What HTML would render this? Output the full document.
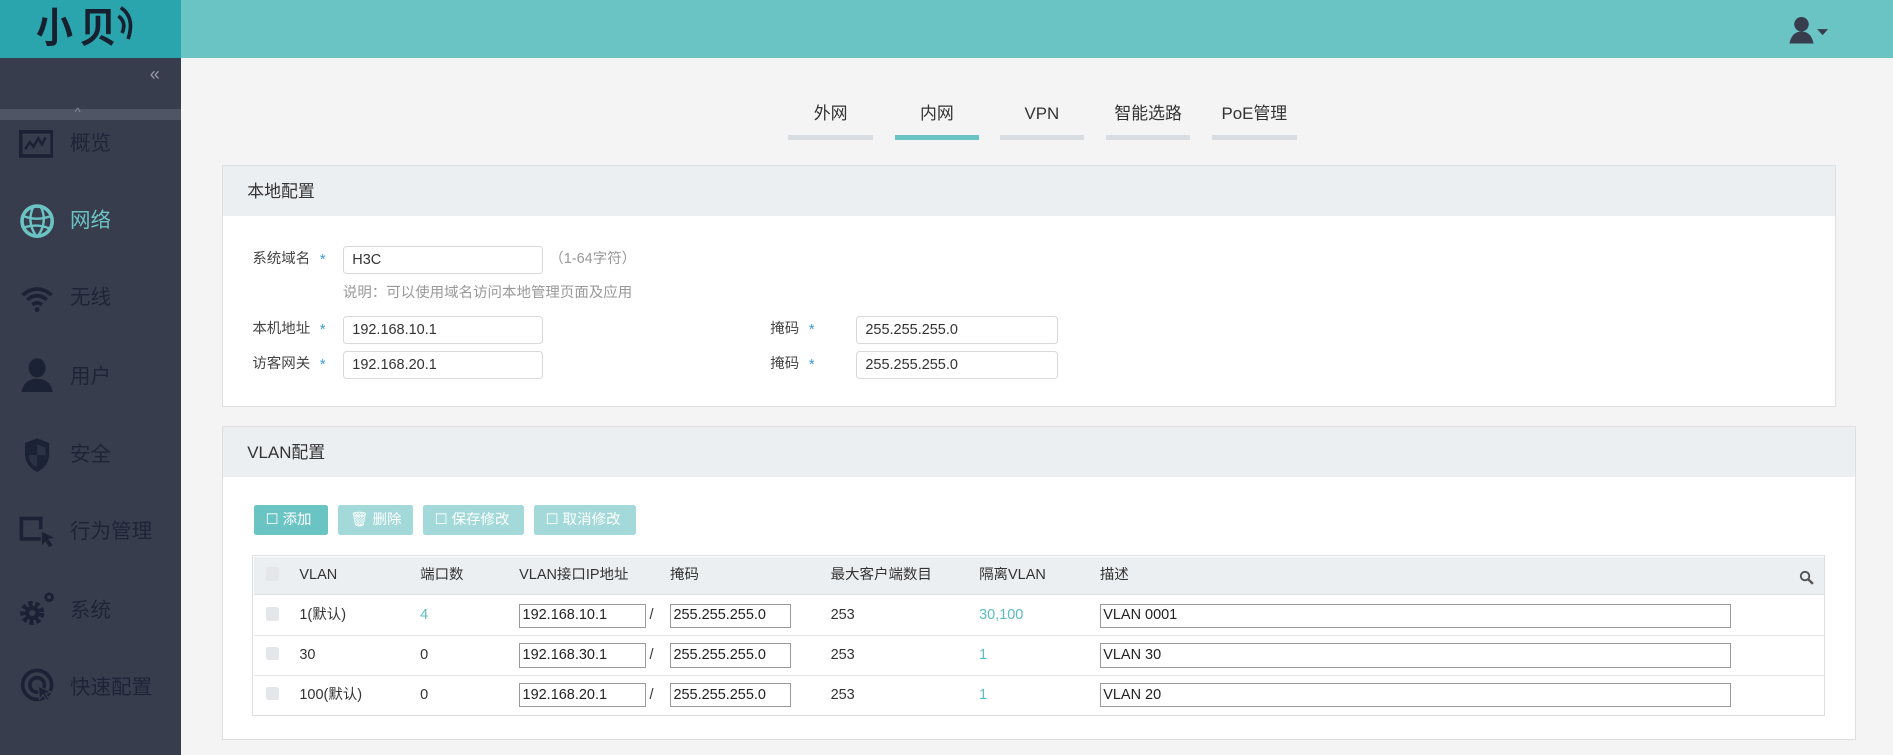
<!DOCTYPE html>
<html><head><meta charset="utf-8"><style>
*{margin:0;padding:0;box-sizing:border-box}
html,body{width:1893px;height:755px;overflow:hidden;background:#f4f4f4}
#w{position:relative;width:1568px;height:626px;zoom:1.20727;font-family:"Liberation Sans","Noto Sans CJK SC",sans-serif;color:#333;font-size:12px;line-height:14px}
.a{position:absolute}
.hd{left:0;top:0;width:1568px;height:48px;background:#6bc4c4}
.logo{left:0;top:0;width:150px;height:48px;background:#2aa4ad}
.lt{position:absolute;left:30px;top:6px;font-size:34px;line-height:36px;color:#16202e;letter-spacing:6px;font-weight:bold;transform:scaleX(.9);transform-origin:left}
.sb{left:0;top:48px;width:150px;height:578px;background:#383d4d}
.mi{position:absolute;left:58px;font-size:17px;line-height:20px;color:#1e2438}
.ic{position:absolute;left:16px}
.tab{position:absolute;top:86px;font-size:14px;line-height:16px;color:#333;width:70px;text-align:center}
.bar{position:absolute;top:112px;width:70px;height:4px;background:#d8dde3}
.pn{background:#fff;border:1px solid #dde0e3}
.ph{position:absolute;left:0;top:0;right:0;height:41px;background:#eceff2;font-size:14px;line-height:16px;padding:13px 0 0 20px;color:#333}
.lb{position:absolute;font-size:12px;color:#444}
.st{position:absolute;color:#3a9ad9;font-size:12px}
.in{position:absolute;height:23px;border:1px solid #d9d9d9;border-radius:3px;background:#fff;font-size:12px;padding:4px 0 0 7px;color:#333}
.btn{position:absolute;top:418px;height:25px;color:#fff;font-size:12px;padding:6px 0 0 10px;border-radius:2px}
.c{position:absolute;font-size:12px;color:#333}
.cb{position:absolute;left:220px;width:11px;height:11px;background:#e4e6ea;border-radius:2px}
.ti{position:absolute;height:20px;border:1px solid #999;background:#fff;font-size:12px;padding:2px 0 0 2px;color:#222}
.t{color:#5bbcc0}
</style></head><body><div id="w">
<div class="a hd"></div>
<div class="a logo"><div class="lt">小贝</div>
<svg class="a" style="left:96px;top:3px" width="24" height="34"><path d="M4 3q12 8 6 26M2 10q7 5 3 14" fill="none" stroke="#16202e" stroke-width="3"/></svg></div>
<svg class="a" style="left:1480px;top:14px" width="40" height="24"><circle cx="12" cy="6" r="6" fill="#383d4d"/><path d="M2 22 Q4 12 12 12 Q20 12 22 22Z" fill="#383d4d"/><path d="M25 10h9l-4.5 5z" fill="#383d4d"/></svg>
<div class="a sb"></div>
<div class="a" style="left:124px;top:55px;color:#99a;font-size:15px">«</div>
<div class="a" style="left:0;top:90px;width:150px;height:9px;background:#4f5565"></div>
<div class="a" style="left:62px;top:88px;color:#8a8f9a;font-size:10px;line-height:10px">^</div>
<div class="mi" style="top:109px">概览</div>
<svg class="ic" style="top:108px" width="28" height="24"><rect x="1.5" y="1.5" width="26" height="20" fill="none" stroke="#1b2236" stroke-width="3"/><path d="M5 16l4-6 3 4 4-7 3 5 3-6" fill="none" stroke="#1b2236" stroke-width="2"/></svg>
<div class="mi" style="top:173px;color:#6bc4c4">网络</div>
<svg class="ic" style="top:168px" width="30" height="30"><circle cx="15" cy="15" r="12.5" fill="none" stroke="#6bc4c4" stroke-width="3"/><path d="M4 11q11 4 22 0M5 20q10-3 20 1M12 3q-6 12 2 24M18 3q6 12-2 24" fill="none" stroke="#6bc4c4" stroke-width="2"/></svg>
<div class="mi" style="top:237px">无线</div>
<svg class="ic" style="top:234px" width="30" height="26"><path d="M3 10q12-10 24 0M7 14q8-7 16 0M11 18q4-3 8 0" fill="none" stroke="#1b2236" stroke-width="3"/><circle cx="15" cy="22" r="2" fill="#1b2236"/></svg>
<div class="mi" style="top:302px">用户</div>
<svg class="ic" style="top:296px" width="30" height="30"><ellipse cx="15" cy="9" rx="7" ry="8" fill="#1b2236"/><path d="M2 29q2-11 13-11t13 11z" fill="#1b2236"/></svg>
<div class="mi" style="top:367px">安全</div>
<svg class="ic" style="top:362px" width="30" height="30"><path d="M5 5l10-4 10 4v9q0 10-10 15Q5 24 5 14z" fill="#1b2236"/><path d="M15 6v9h7v-6zM8 15h7v10q-7-3-7-10z" fill="#383d4d" opacity=".6"/></svg>
<div class="mi" style="top:431px">行为管理</div>
<svg class="ic" style="top:427px" width="32" height="28"><path d="M18 19H2V2h16v9" fill="none" stroke="#1b2236" stroke-width="3"/><path d="M19 13l10 5-5 1 4 5-3 2-3-5-3 3z" fill="#1b2236"/></svg>
<div class="mi" style="top:496px">系统</div>
<svg class="ic" style="top:489px" width="32" height="32"><circle cx="11" cy="19" r="7" fill="none" stroke="#1b2236" stroke-width="6" stroke-dasharray="3 2"/><circle cx="11" cy="19" r="6" fill="#1b2236"/><circle cx="11" cy="19" r="2.5" fill="#383d4d"/><circle cx="25" cy="6" r="4" fill="#1b2236"/><circle cx="25" cy="6" r="1.5" fill="#383d4d"/></svg>
<div class="mi" style="top:560px">快速配置</div>
<svg class="ic" style="top:553px" width="32" height="32"><circle cx="15" cy="14" r="12" fill="none" stroke="#1b2236" stroke-width="3"/><circle cx="15" cy="14" r="6" fill="none" stroke="#1b2236" stroke-width="3"/><path d="M16 15l11 5-5 1 3 5-2 1-3-5-3 4z" fill="#1b2236" stroke="#383d4d"/></svg>

<div class="tab" style="left:653px">外网</div><div class="tab" style="left:741px">内网</div><div class="tab" style="left:828px">VPN</div><div class="tab" style="left:916px">智能选路</div><div class="tab" style="left:1004px">PoE管理</div>
<div class="bar" style="left:653px"></div><div class="bar" style="left:741px;background:#6bc4c4"></div><div class="bar" style="left:828px"></div><div class="bar" style="left:916px"></div><div class="bar" style="left:1004px"></div>

<div class="a pn" style="left:184px;top:137px;width:1337px;height:200px"><div class="ph">本地配置</div></div>
<div class="lb" style="left:209px;top:208px">系统域名</div><div class="st" style="left:265px;top:209px">*</div>
<div class="in" style="left:284px;top:204px;width:166px">H3C</div>
<div class="lb" style="left:455px;top:208px;color:#999">（1-64字符）</div>
<div class="lb" style="left:284px;top:236px;color:#999">说明：可以使用域名访问本地管理页面及应用</div>
<div class="lb" style="left:209px;top:266px">本机地址</div><div class="st" style="left:265px;top:267px">*</div>
<div class="in" style="left:284px;top:262px;width:166px">192.168.10.1</div>
<div class="lb" style="left:209px;top:295px">访客网关</div><div class="st" style="left:265px;top:296px">*</div>
<div class="in" style="left:284px;top:291px;width:166px">192.168.20.1</div>
<div class="lb" style="left:638px;top:266px">掩码</div><div class="st" style="left:670px;top:267px">*</div>
<div class="in" style="left:709px;top:262px;width:167px">255.255.255.0</div>
<div class="lb" style="left:638px;top:295px">掩码</div><div class="st" style="left:670px;top:296px">*</div>
<div class="in" style="left:709px;top:291px;width:167px">255.255.255.0</div>

<div class="a pn" style="left:184px;top:353px;width:1353px;height:260px"><div class="ph">VLAN配置</div></div>
<div class="btn" style="left:210px;width:62px;background:#6bc4c4">☐ 添加</div>
<div class="btn" style="left:280px;width:62px;background:#a3d9d9">🗑 删除</div>
<div class="btn" style="left:350px;width:84px;background:#a3d9d9">☐ 保存修改</div>
<div class="btn" style="left:442px;width:85px;background:#a3d9d9">☐ 取消修改</div>
<div class="a" style="left:209px;top:460px;width:1303px;height:133px;border:1px solid #dde0e3;background:#fff"></div>
<div class="a" style="left:210px;top:461px;width:1301px;height:32px;background:#eceff2;border-bottom:1px solid #dde0e3"></div>
<div class="a" style="left:210px;top:526px;width:1301px;border-top:1px solid #e3e5e8"></div>
<div class="a" style="left:210px;top:559px;width:1301px;border-top:1px solid #e3e5e8"></div>
<div class="cb" style="top:470px"></div><div class="cb" style="top:503px"></div><div class="cb" style="top:536px"></div><div class="cb" style="top:569px"></div>
<div class="c" style="left:248px;top:470px">VLAN</div><div class="c" style="left:348px;top:470px">端口数</div><div class="c" style="left:430px;top:470px">VLAN接口IP地址</div><div class="c" style="left:555px;top:470px">掩码</div><div class="c" style="left:688px;top:470px">最大客户端数目</div><div class="c" style="left:811px;top:470px">隔离VLAN</div><div class="c" style="left:911px;top:470px">描述</div>
<svg class="a" style="left:1490px;top:472px" width="13" height="13"><circle cx="5" cy="5" r="3.5" fill="none" stroke="#555" stroke-width="1.6"/><path d="M7.5 7.5l4 4" stroke="#555" stroke-width="2"/></svg>
<div class="c" style="left:248px;top:503px">1(默认)</div><div class="c t" style="left:348px;top:503px">4</div>
<div class="ti" style="left:430px;top:500px;width:105px">192.168.10.1</div><div class="c" style="left:538px;top:503px">/</div><div class="ti" style="left:555px;top:500px;width:100px">255.255.255.0</div>
<div class="c" style="left:688px;top:503px">253</div><div class="c t" style="left:811px;top:503px">30,100</div><div class="ti" style="left:911px;top:500px;width:523px">VLAN 0001</div>
<div class="c" style="left:248px;top:536px">30</div><div class="c" style="left:348px;top:536px">0</div>
<div class="ti" style="left:430px;top:533px;width:105px">192.168.30.1</div><div class="c" style="left:538px;top:536px">/</div><div class="ti" style="left:555px;top:533px;width:100px">255.255.255.0</div>
<div class="c" style="left:688px;top:536px">253</div><div class="c t" style="left:811px;top:536px">1</div><div class="ti" style="left:911px;top:533px;width:523px">VLAN 30</div>
<div class="c" style="left:248px;top:569px">100(默认)</div><div class="c" style="left:348px;top:569px">0</div>
<div class="ti" style="left:430px;top:566px;width:105px">192.168.20.1</div><div class="c" style="left:538px;top:569px">/</div><div class="ti" style="left:555px;top:566px;width:100px">255.255.255.0</div>
<div class="c" style="left:688px;top:569px">253</div><div class="c t" style="left:811px;top:569px">1</div><div class="ti" style="left:911px;top:566px;width:523px">VLAN 20</div>
</div></body></html>
